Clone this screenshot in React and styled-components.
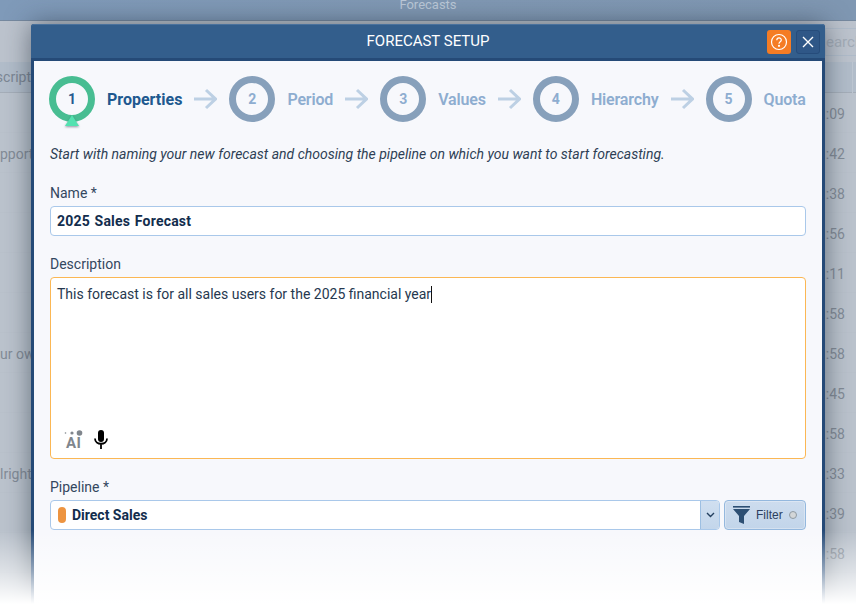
import React from "react";
import styled, { createGlobalStyle } from "styled-components";

const Global = createGlobalStyle`
  html, body { margin: 0; padding: 0; height: 604px; overflow: hidden; background: #bcc3cd; }
  * { box-sizing: border-box; }
  #root { font-family: Roboto, "Liberation Sans", sans-serif; }
`;

const Page = styled.div`
  position: relative;
  width: 856px;
  height: 604px;
  overflow: hidden;
  background: #bbc3cd;
`;
const TopBar = styled.div`
  height: 21px;
  background: linear-gradient(90deg, #7f9ab9 0%, #8098b3 50%, #7f97b2 100%);
  border-bottom: 1px solid #76899f;
  color: #bcc9d8;
  font-size: 13px;
  line-height: 10px;
  text-align: center;
`;
const Toolbar = styled.div`
  height: 41px;
  display: flex;
  justify-content: flex-end;
  align-items: center;
  background: #bcc3cd;
`;
const SearchBox = styled.div`
  width: 31px;
  height: 28px;
  margin-top: 1px;
  border: 1px solid #b0bcca;
  border-right: 0;
  color: #a3acb7;
  font-size: 15px;
  line-height: 26px;
  white-space: nowrap;
  overflow: hidden;
`;
const TableHead = styled.div`
  height: 31px;
  display: flex;
  justify-content: space-between;
  align-items: center;
  background: #b2bdca;
  border-bottom: 1px solid #a5aeb9;
  color: #7c8794;
  font-size: 14px;
`;
const HeadLabel = styled.span`
  width: 31px;
  display: flex;
  justify-content: flex-end;
  overflow: hidden;
  white-space: nowrap;
`;
const HeadCell = styled.span`
  width: 1px;
  height: 31px;
  margin-right: 3px;
  background: #bdc6d1;
`;
const Row = styled.div`
  height: 40px;
  padding-top: 2px;
  display: flex;
  justify-content: space-between;
  align-items: center;
  border-bottom: 1px solid #b9c1cb;
  color: #838c97;
  font-size: 14px;
`;
const RowLead = styled.span`
  width: 31px;
  overflow: hidden;
  white-space: nowrap;
`;
const RowTime = styled.span`
  width: 31px;
  padding-right: 11px;
  text-align: right;
`;

const Modal = styled.div`
  position: absolute;
  left: 31px;
  top: 24px;
  width: 794px;
  height: 580px;
  display: flex;
  flex-direction: column;
  border: 3px solid #254a77;
  border-top: 0;
  border-bottom: 0;
  border-radius: 3px 3px 0 0;
  background: #f7f8fc;
  box-shadow: 0 0 26px rgba(30, 40, 55, 0.55);
`;
const Header = styled.div`
  height: 37px;
  margin: 0 -3px;
  position: relative;
  display: flex;
  align-items: center;
  justify-content: center;
  padding-bottom: 1px;
  background: #335e8c;
  border-top: 1px solid #4a729d;
  border-bottom: 3px solid #254a77;
  border-radius: 3px 3px 0 0;
  color: #fff;
  font-size: 15px;
`;
const HeaderActions = styled.div`
  position: absolute;
  right: 5px;
  top: 5px;
  display: flex;
  gap: 5px;
`;
const HelpButton = styled.div`
  width: 24px;
  height: 24px;
  display: flex;
  align-items: center;
  justify-content: center;
  border-radius: 3px;
  background: #f57c24;
`;
const CloseButton = styled.div`
  width: 24px;
  height: 24px;
  display: flex;
  align-items: center;
  justify-content: center;
  border-radius: 3px;
  background: #2f5787;
  border: 1px solid #264c7b;
`;
const Body = styled.div`
  flex: 1;
  display: flex;
  flex-direction: column;
  padding: 15px 16px 0;
`;
const Stepper = styled.div`
  display: flex;
  align-items: center;
  gap: 12px;
  height: 46px;
  margin-left: -1px;
`;
const Circle = styled.div`
  position: relative;
  width: 46px;
  height: 46px;
  flex: none;
  display: flex;
  align-items: center;
  justify-content: center;
  border-radius: 50%;
  border: 7px solid ${(p) => (p.$active ? "#48bd92" : "#87a0bb")};
  color: ${(p) => (p.$active ? "#27598f" : "#8eadd0")};
  font-size: 14px;
  font-weight: 700;
`;
const Pointer = styled.span`
  position: absolute;
  left: 50%;
  bottom: -11px;
  margin-left: -7px;
  width: 0;
  height: 0;
  border-left: 7px solid transparent;
  border-right: 7px solid transparent;
  border-bottom: 11px solid #53e2b0;
  filter: drop-shadow(0 1px 1px rgba(60, 70, 90, 0.55));
`;
const StepLabel = styled.span`
  font-size: 16px;
  font-weight: ${(p) => (p.$active ? 700 : 600)};
  letter-spacing: ${(p) => (p.$active ? "0" : "-0.15px")};
  color: ${(p) => (p.$active ? "#20588f" : "#8eadd0")};
  white-space: nowrap;
`;
const Intro = styled.p`
  margin: 24px 0 0;
  height: 17px;
  font-size: 14px;
  line-height: 17px;
  font-style: italic;
  color: #2e3f55;
`;
const Label = styled.div`
  margin-top: ${(p) => p.$top}px;
  height: 17px;
  font-size: 14px;
  line-height: 17px;
  color: #33475f;
`;
const TextInput = styled.div`
  margin-top: 4px;
  height: 30px;
  padding: 0 6px;
  background: #fff;
  border: 1px solid #a9c8ea;
  border-radius: 4px;
  font-size: 14px;
  line-height: 28px;
  font-weight: 700;
  letter-spacing: 0.2px;
  word-spacing: 1px;
  color: #122d4d;
`;
const TextArea = styled.div`
  margin-top: 4px;
  height: 182px;
  padding: 6px 6px;
  position: relative;
  background: #fff;
  border: 1px solid #fbb754;
  border-radius: 4px;
  font-size: 14px;
  line-height: 20px;
  color: #26384f;
`;
const Caret = styled.span`
  display: inline-block;
  width: 1px;
  height: 17px;
  margin-bottom: -4px;
  background: #111;
`;
const TextTools = styled.div`
  position: absolute;
  left: 13px;
  bottom: 9px;
  display: flex;
  align-items: center;
  gap: 12px;
`;
const AiMark = styled.div`
  position: relative;
  width: 18px;
  height: 18px;
  padding: 5px 0 0 2px;
  color: #80868d;
  font-size: 15px;
  font-weight: 700;
  letter-spacing: 0.5px;
  line-height: 15px;
`;
const AiDots = styled.svg`
  position: absolute;
  left: 0;
  top: -1px;
`;
const PipelineRow = styled.div`
  display: flex;
  gap: 4px;
  margin-top: 4px;
  height: 30px;
`;
const SelectBox = styled.div`
  flex: 1;
  display: flex;
  background: #fff;
  border: 1px solid #a9c8ea;
  border-radius: 4px;
  overflow: hidden;
`;
const SelectValue = styled.div`
  flex: 1;
  display: flex;
  align-items: center;
  gap: 6px;
  padding-left: 7px;
  font-size: 14px;
  font-weight: 700;
  color: #122d4d;
`;
const Swatch = styled.span`
  width: 8px;
  height: 16px;
  border-radius: 4px;
  background: #ed9440;
`;
const SelectArrow = styled.div`
  width: 19px;
  display: flex;
  align-items: center;
  justify-content: center;
  background: linear-gradient(180deg, #d0dff0, #c3d6eb);
  border-left: 1px solid #9dbfe2;
`;
const FilterButton = styled.div`
  width: 82px;
  display: flex;
  align-items: center;
  padding-left: 8px;
  background: linear-gradient(180deg, #cddcee, #c2d5ea);
  border: 1px solid #94b8de;
  border-radius: 4px;
  box-shadow: inset 0 0 0 1px rgba(255, 255, 255, 0.3);
  font-family: "Liberation Sans", Arial, sans-serif;
  font-size: 12px;
  color: #2c3f5f;
`;
const FilterLabel = styled.span`
  margin-left: 6px;
`;
const StatusDot = styled.span`
  width: 8px;
  height: 8px;
  margin-left: 6px;
  border-radius: 50%;
  background: #d3d6d8;
  border: 1px solid #8f9aa3;
`;
const BottomFade = styled.div`
  position: absolute;
  left: 0;
  right: 0;
  bottom: 0;
  height: 74px;
  background: linear-gradient(180deg, rgba(255,255,255,0) 0%, rgba(255,255,255,0.5) 55%, #fff 100%);
  pointer-events: none;
`;

const leads = { 1: "pport", 6: "ur own", 9: "lright" };
const times = ["09", "42", "38", "56", "11", "58", "58", "45", "58", "33", "39", "58"];

function Arrow() {
  return (
    <svg width="23" height="22" viewBox="0 0 23 22" fill="none" style={{ flex: "none" }}>
      <path d="M0 11H21M12 2l9.5 9-9.5 9" stroke="#bdd0e4" strokeWidth="3" />
    </svg>
  );
}

const steps = ["Properties", "Period", "Values", "Hierarchy", "Quota"];

export default function App() {
  return (
    <Page>
      <Global />
      <TopBar>Forecasts</TopBar>
      <Toolbar><SearchBox>earch</SearchBox></Toolbar>
      <TableHead>
        <HeadLabel>Descript</HeadLabel>
        <HeadCell />
      </TableHead>
      {times.map((t, i) => (
        <Row key={i}>
          <RowLead>{leads[i] || ""}</RowLead>
          <RowTime>:{t}</RowTime>
        </Row>
      ))}
      <Modal>
        <Header>
          FORECAST SETUP
          <HeaderActions>
            <HelpButton>
              <svg width="18" height="18" viewBox="0 0 18 18" fill="none" stroke="#fff" strokeWidth="1.2">
                <circle cx="9" cy="9" r="7.5" />
                <path d="M6.8 7.2c0-3 4.5-3 4.5-.2 0 1.8-2.3 1.7-2.3 3.7" />
                <circle cx="9" cy="12.8" r=".5" fill="#fff" />
              </svg>
            </HelpButton>
            <CloseButton>
              <svg width="12" height="12" viewBox="0 0 12 12" stroke="#fff" strokeWidth="1.4">
                <path d="M1 1l10 10M11 1L1 11" />
              </svg>
            </CloseButton>
          </HeaderActions>
        </Header>
        <Body>
          <Stepper>
            {steps.map((s, i) => (
              <React.Fragment key={s}>
                <Circle $active={i === 0}>
                  {i + 1}
                  {i === 0 && <Pointer />}
                </Circle>
                <StepLabel $active={i === 0}>{s}</StepLabel>
                {i < steps.length - 1 && <Arrow />}
              </React.Fragment>
            ))}
          </Stepper>
          <Intro>Start with naming your new forecast and choosing the pipeline on which you want to start forecasting.</Intro>
          <Label $top={22}>Name *</Label>
          <TextInput>2025 Sales Forecast</TextInput>
          <Label $top={20}>Description</Label>
          <TextArea>
            This forecast is for all sales users for the 2025 financial year<Caret />
            <TextTools>
              <AiMark>
                <AiDots width="20" height="8" viewBox="0 0 20 8" fill="#80868d">
                  <circle cx="1.5" cy="3" r=".8" />
                  <circle cx="8" cy="3" r="1.6" />
                  <circle cx="15.5" cy="3" r="2.8" />
                </AiDots>
                AI
              </AiMark>
              <svg width="14" height="19" viewBox="0 0 14 19" fill="none">
                <rect x="4" y="0" width="6" height="12" rx="3" fill="#000" />
                <path d="M1 8.5c0 7 12 7 12 0M7 14v5" stroke="#000" strokeWidth="1.8" />
              </svg>
            </TextTools>
          </TextArea>
          <Label $top={20}>Pipeline *</Label>
          <PipelineRow>
            <SelectBox>
              <SelectValue><Swatch />Direct Sales</SelectValue>
              <SelectArrow>
                <svg width="9" height="6" viewBox="0 0 9 6" fill="none" stroke="#24405f" strokeWidth="1.4">
                  <path d="M1 1l3.5 3.5L8 1" />
                </svg>
              </SelectArrow>
            </SelectBox>
            <FilterButton>
              <svg width="17" height="18" viewBox="0 0 17 18" fill="#2d4f73">
                <rect x="0" y="0" width="17" height="1.6" />
                <path d="M0 3h17l-6 7v8l-5-2v-6z" />
              </svg>
              <FilterLabel>Filter</FilterLabel>
              <StatusDot />
            </FilterButton>
          </PipelineRow>
        </Body>
      </Modal>
      <BottomFade />
    </Page>
  );
}
